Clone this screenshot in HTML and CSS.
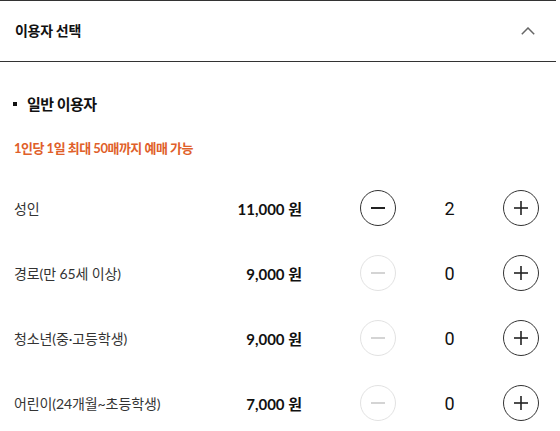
FILE: index.html
```html
<!DOCTYPE html>
<html lang="ko">
<head>
<meta charset="utf-8">
<title>이용자 선택</title>
<link rel="stylesheet" href="styles.css">
</head>
<body>
<div class="panel">
  <div class="panel-head">
    <h2 class="panel-title">이용자 선택</h2>
    <svg class="chevron" width="14" height="8" viewBox="0 0 14 8"><polyline points="0.8,7.2 7,1 13.2,7.2" fill="none" stroke="#666" stroke-width="1.5"/></svg>
  </div>
  <div class="section">
    <h3 class="section-title"><span class="bullet"></span>일반 이용자</h3>
    <p class="notice">1인당 1일 최대 50매까지 예매 가능</p>
    <div class="rows">
      <div class="row">
        <span class="label">성인</span>
        <span class="price">11,000 원</span>
        <div class="counter">
          <button class="btn"><svg width="16" height="16" viewBox="0 0 16 16"><line x1="1" y1="8" x2="15" y2="8" stroke="#222" stroke-width="2"/></svg></button>
          <span class="count">2</span>
          <button class="btn"><svg width="16" height="16" viewBox="0 0 16 16"><line x1="1" y1="8" x2="15" y2="8" stroke="#222" stroke-width="1.6"/><line x1="8" y1="1" x2="8" y2="15" stroke="#222" stroke-width="1.6"/></svg></button>
        </div>
      </div>
      <div class="row">
        <span class="label">경로(만 65세 이상)</span>
        <span class="price">9,000 원</span>
        <div class="counter">
          <button class="btn off"><svg width="16" height="16" viewBox="0 0 16 16"><line x1="1" y1="8" x2="15" y2="8" stroke="#d4d4d4" stroke-width="2"/></svg></button>
          <span class="count">0</span>
          <button class="btn"><svg width="16" height="16" viewBox="0 0 16 16"><line x1="1" y1="8" x2="15" y2="8" stroke="#222" stroke-width="1.6"/><line x1="8" y1="1" x2="8" y2="15" stroke="#222" stroke-width="1.6"/></svg></button>
        </div>
      </div>
      <div class="row">
        <span class="label">청소년(중·고등학생)</span>
        <span class="price">9,000 원</span>
        <div class="counter">
          <button class="btn off"><svg width="16" height="16" viewBox="0 0 16 16"><line x1="1" y1="8" x2="15" y2="8" stroke="#d4d4d4" stroke-width="2"/></svg></button>
          <span class="count">0</span>
          <button class="btn"><svg width="16" height="16" viewBox="0 0 16 16"><line x1="1" y1="8" x2="15" y2="8" stroke="#222" stroke-width="1.6"/><line x1="8" y1="1" x2="8" y2="15" stroke="#222" stroke-width="1.6"/></svg></button>
        </div>
      </div>
      <div class="row">
        <span class="label">어린이(24개월~초등학생)</span>
        <span class="price">7,000 원</span>
        <div class="counter">
          <button class="btn off"><svg width="16" height="16" viewBox="0 0 16 16"><line x1="1" y1="8" x2="15" y2="8" stroke="#d4d4d4" stroke-width="2"/></svg></button>
          <span class="count">0</span>
          <button class="btn"><svg width="16" height="16" viewBox="0 0 16 16"><line x1="1" y1="8" x2="15" y2="8" stroke="#222" stroke-width="1.6"/><line x1="8" y1="1" x2="8" y2="15" stroke="#222" stroke-width="1.6"/></svg></button>
        </div>
      </div>
    </div>
  </div>
</div>
</body>
</html>
```
FILE: styles.css
```css
* { box-sizing: border-box; }
html, body { margin: 0; padding: 0; background: #fff; }
body {
  font-family: "Lato", "Noto Sans CJK KR", sans-serif;
  color: #222;
}
.panel {
  width: 556px;
  border-top: 1px solid #333;
}
.panel-head {
  height: 61px;
  border-bottom: 1px solid #333;
  display: flex;
  align-items: center;
  justify-content: space-between;
  padding: 0 21px 0 15px;
}
.panel-title {
  margin: 0;
  font-size: 14px;
  font-weight: 700;
  line-height: 20px;
  color: #111;
  letter-spacing: -0.3px;
}
.chevron { display: block; margin-top: -1px; }
.section {
  padding: 32px 17px 0 14px;
}
.section-title {
  margin: 0;
  display: flex;
  align-items: center;
  font-size: 15px;
  font-weight: 700;
  line-height: 20px;
  color: #111;
  letter-spacing: -0.5px;
}
.bullet {
  width: 4px;
  height: 4px;
  background: #111;
  margin: 0 10px 0 -1px;
}
.notice {
  margin: 24px 0 0;
  font-size: 13px;
  font-weight: 700;
  line-height: 20px;
  color: #e0602a;
  letter-spacing: -0.5px;
}
.rows {
  margin-top: 32px;
  display: grid;
  row-gap: 29px;
}
.row {
  display: flex;
  align-items: center;
  height: 36px;
}
.label {
  flex: 1;
  font-size: 14px;
  color: #333;
  letter-spacing: -0.1px;
}
.price {
  font-size: 15px;
  font-weight: 700;
  color: #111;
  letter-spacing: 0;
}
.counter {
  margin-left: 58px;
  display: flex;
  align-items: center;
}
.btn {
  width: 36px;
  height: 36px;
  border: 1px solid #333;
  border-radius: 50%;
  background: #fff;
  padding: 0;
  display: flex;
  align-items: center;
  justify-content: center;
}
.btn.off { border-color: #e2e2e2; }
.btn svg { display: block; }
.count {
  width: 107px;
  text-align: center;
  font-family: "Roboto", sans-serif;
  font-size: 18px;
  color: #111;
}
```
